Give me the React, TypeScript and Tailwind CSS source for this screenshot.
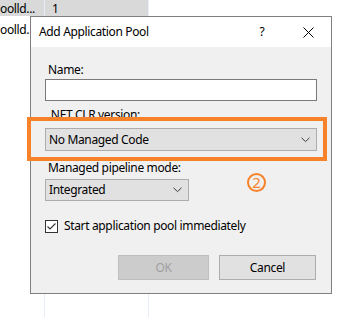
import React from "react";

const font = { fontFamily: '"Noto Sans", "Segoe UI", sans-serif' };

function Chevron() {
  return (
    <svg width="9" height="6" viewBox="0 0 9 6" className="shrink-0">
      <path d="M0.5 0.8 L4.5 4.6 L8.5 0.8" fill="none" stroke="#3c3c3c" strokeWidth="1" />
    </svg>
  );
}

export default function App() {
  return (
    <div className="relative w-[360px] h-[317px] overflow-hidden bg-white text-[12px] tracking-[-0.35px] text-black" style={font}>
      {/* background list */}
      <div className="flex h-full">
        <div className="w-[45px] h-full border-r border-[#e6edf6] flex flex-col">
          <div className="h-[16px] bg-[#d9d9d9] pt-[1px] leading-[16px] overflow-hidden whitespace-nowrap">oolld...</div>
          <div className="pt-[6px] leading-[16px] whitespace-nowrap">oolld..</div>
        </div>
        <div className="w-[104px] h-full border-r border-[#e6edf6] flex flex-col">
          <div className="h-[16px] bg-[#d9d9d9] pt-[1px] pl-[7px] leading-[16px] overflow-hidden">1</div>
        </div>
      </div>

      {/* dialog window */}
      <div className="absolute left-[30px] top-[16px] w-[302px] h-[278px] border border-[#7f7f7f] bg-[#f0f0f0] flex flex-col">
        <div className="h-[30px] bg-white flex items-center pl-[8px] pr-[17px] shrink-0">
          <span className="flex-1 leading-[16px]">Add Application Pool</span>
          <span className="w-[10px] text-center leading-[16px] mr-[36px]">?</span>
          <svg width="11" height="11" viewBox="0 0 11 11">
            <path d="M0.5 0.5 L10.5 10.5 M10.5 0.5 L0.5 10.5" stroke="#000" strokeWidth="1" />
          </svg>
        </div>
        <div className="flex flex-col pl-[14px] pt-[15px]">
          <div className="pl-[3px] leading-[16px]">Name:</div>
          <div className="w-[272px] h-[22px] mt-[1px] bg-white border border-[#7a7a7a]" />
          <div className="pl-[3px] leading-[16px] mt-[6px]">.NET CLR version:</div>
          <div className="w-[272px] h-[23px] mt-[5px] bg-[#e1e1e1] border border-[#adadad] flex items-center pl-[3px] pr-[6px]">
            <span className="flex-1 leading-[16px]">No Managed Code</span>
            <Chevron />
          </div>
          <div className="pl-[3px] leading-[16px] mt-[9px]">Managed pipeline mode:</div>
          <div className="w-[144px] h-[22px] mt-[3px] bg-[#e1e1e1] border border-[#adadad] flex items-center pl-[3px] pr-[6px]">
            <span className="flex-1 leading-[16px]">Integrated</span>
            <Chevron />
          </div>
          <div className="flex items-center mt-[17px] h-[16px]">
            <div className="w-[13px] h-[13px] bg-white border border-[#333333] flex items-center justify-center">
              <svg width="11" height="11" viewBox="0 0 11 11">
                <path d="M1.5 5.5 L4 8 L9.5 2.5" fill="none" stroke="#333" strokeWidth="1.1" />
              </svg>
            </div>
            <span className="ml-[6px] leading-[16px]">Start application pool immediately</span>
          </div>
          <div className="flex mt-[21px] pl-[73px]">
            <div className="w-[91px] h-[25px] bg-[#cccccc] border border-[#bfbfbf] flex items-center justify-center text-[#a0a0a0]">OK</div>
            <div className="w-[97px] h-[25px] ml-[10px] bg-[#e1e1e1] border border-[#adadad] flex items-center justify-center">Cancel</div>
          </div>
        </div>
      </div>

      {/* annotations */}
      <div className="absolute left-[27px] top-[117px] w-[300px] h-[44px] border-4 border-[#f7822a]" />
      <div className="absolute left-[247px] top-[173px] w-[19px] h-[19px] rounded-full border-2 border-[#f7822a] text-[#f7822a] flex items-center justify-center text-[15px] tracking-normal leading-none">
        2
      </div>
    </div>
  );
}
